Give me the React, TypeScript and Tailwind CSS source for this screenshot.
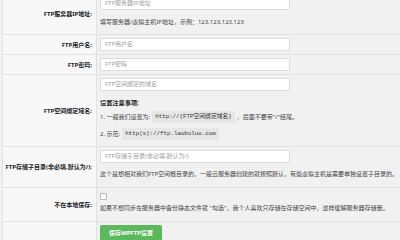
const font = { fontFamily: '"Noto Sans", "Noto Sans CJK SC", sans-serif' };

function Label({ text }: { text: string }) {
  return (
    <div className="flex items-center justify-end whitespace-nowrap border-r border-[#e2e2e2] bg-[#f8f8f8] pr-[4px] text-right text-[6px] font-bold leading-[10px] text-[#1d2327]">
      {text}
    </div>
  );
}

function Field({ placeholder }: { placeholder: string }) {
  return (
    <div className="flex h-[13px] w-[190px] items-center rounded-[1px] border border-[#dddddd] bg-white px-[4px] text-[6px] text-[#a0a0a0]">
      {placeholder}
    </div>
  );
}

function Code({ children }: { children: string }) {
  return (
    <code
      className="mx-[2px] bg-[#e6e6e6] px-[3px] py-[1px] text-[5.8px] leading-[10px] text-[#333]"
      style={{ fontFamily: '"Liberation Mono", "Noto Sans CJK SC", monospace' }}
    >
      {children}
    </code>
  );
}

export default function App() {
  return (
    <div className="h-[240px] w-[400px] overflow-hidden bg-[#f1f1f1] pl-[2px]" style={font}>
      <div className="-mt-[6px] grid grid-cols-[94px_1fr] border-l border-[#e2e2e2]">
        {/* IP */}
        <Label text="FTP服务器IP地址:" />
        <div className="px-[3px] py-[3px]">
          <Field placeholder="FTP服务器IP地址" />
          <p className="mt-[7px] mb-[4px] text-[6px] leading-[10px] text-[#444]">
            填写服务器/虚拟主机IP地址，示例：123.123.123.123
          </p>
        </div>
        <div className="col-span-2 h-px bg-[#e2e2e2]" />

        {/* user */}
        <Label text="FTP用户名:" />
        <div className="px-[3px] py-[3px]">
          <Field placeholder="FTP用户名" />
        </div>
        <div className="col-span-2 h-px bg-[#e2e2e2]" />

        {/* password */}
        <Label text="FTP密码:" />
        <div className="px-[3px] py-[3px]">
          <Field placeholder="FTP密码" />
        </div>
        <div className="col-span-2 h-px bg-[#e2e2e2]" />

        {/* domain */}
        <Label text="FTP空间绑定域名:" />
        <div className="px-[3px] py-[3px] text-[6px] text-[#444]">
          <Field placeholder="FTP空间绑定的域名" />
          <h4 className="mt-[7px] text-[6.2px] font-bold leading-[10px] text-[#1d2327]">设置注意事项:</h4>
          <div className="mt-[3px] flex h-[12px] items-center leading-[10px]">
            1. 一般我们设置为:
            <Code>{"http://{FTP空间绑定域名}"}</Code>
            ，后面不要带"/"结尾。
          </div>
          <div className="mt-[5px] mb-[3px] flex h-[12px] items-center leading-[10px]">
            2. 示范:
            <Code>http(s)://ftp.laobuluo.com</Code>
          </div>
        </div>
        <div className="col-span-2 h-px bg-[#e2e2e2]" />

        {/* sub dir */}
        <Label text="FTP存储子目录(非必填,默认为/):" />
        <div className="px-[3px] py-[3px]">
          <Field placeholder="FTP存储子目录(非必填,默认为/)" />
          <p className="mt-[6px] mb-[5px] whitespace-nowrap text-[6px] leading-[10px] text-[#444]">
            这个是想相对我们FTP空间根目录的，一般云服务器创建的就按照默认，有些虚拟主机是需要单独设置子目录的。
          </p>
        </div>
        <div className="col-span-2 h-px bg-[#e2e2e2]" />

        {/* no local */}
        <Label text="不在本地保存:" />
        <div className="px-[3px] py-[3px]">
          <div className="flex h-[10px] items-center">
            <span className="h-[7px] w-[7px] rounded-[1px] border border-[#b4b9be] bg-white" />
          </div>
          <p className="mt-[2px] mb-[5px] whitespace-nowrap text-[6px] leading-[10px] text-[#444]">
            如果不想同步在服务器中备份静态文件就 "勾选"，我个人喜欢只存储在存储空间中，这样缓解服务器存储量。
          </p>
        </div>
        <div className="col-span-2 h-px bg-[#e2e2e2]" />

        {/* submit */}
        <div className="border-r border-[#e2e2e2] bg-[#f8f8f8]" />
        <div className="px-[3px] pt-[3px] pb-[6px]">
          <button className="flex h-[17px] w-[62px] items-center justify-center rounded-[2px] bg-[#5cb85c] text-[6px] font-bold text-white">
            保存WPFTP设置
          </button>
        </div>
      </div>
    </div>
  );
}
